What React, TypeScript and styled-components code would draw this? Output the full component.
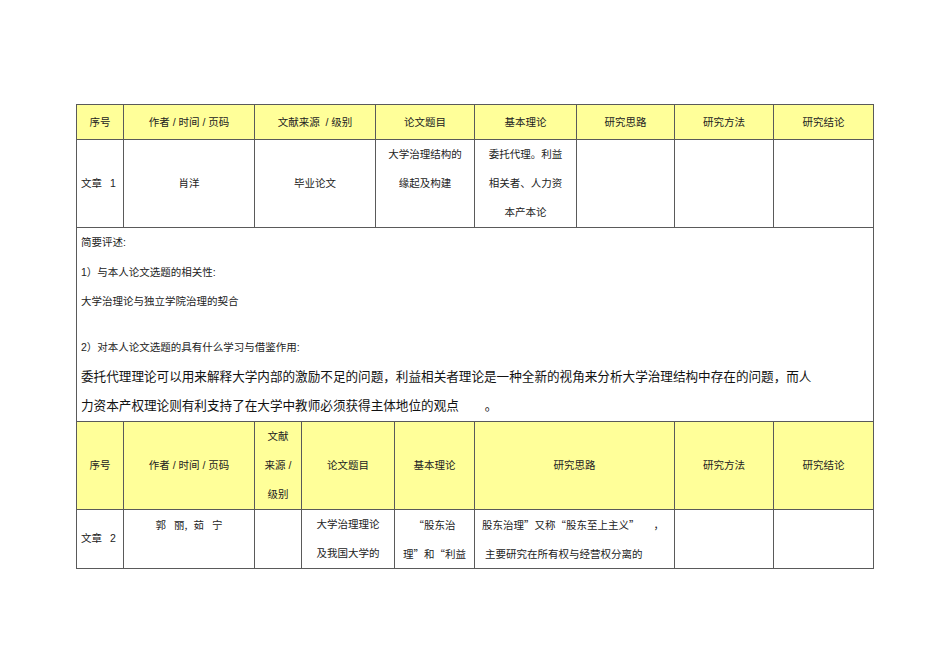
import React from 'react';
import styled, { createGlobalStyle } from 'styled-components';

const GlobalStyle = createGlobalStyle`
  html, body {
    margin: 0;
    padding: 0;
    background: #ffffff;
  }
  body {
    font-family: "Liberation Sans", "Noto Sans CJK SC", sans-serif;
    color: #222222;
  }
`;

const Page = styled.div`
  width: 950px;
  height: 672px;
  padding: 104px 0 0 76px;
  box-sizing: border-box;
`;

const Table = styled.table`
  border-collapse: collapse;
  table-layout: fixed;
  width: 798px;
  & + & {
    margin-top: -1px;
  }
`;

const HeadCell = styled.td`
  background: #ffff99;
  border: 1px solid #5a5a5a;
  padding: 0;
  font-size: 10.5px;
  line-height: 29px;
  text-align: center;
  vertical-align: middle;
  white-space: pre;
`;

const Cell = styled.td<{ $align?: 'left' | 'center'; $valign?: 'top' | 'middle'; $pad?: number; $cjk?: boolean }>`
  border: 1px solid #5a5a5a;
  padding: 0 0 0 ${(p) => p.$pad ?? 0}px;
  font-size: 10.5px;
  line-height: 29px;
  text-align: ${(p) => p.$align ?? 'center'};
  vertical-align: ${(p) => p.$valign ?? 'middle'};
  white-space: nowrap;
  ${(p) => (p.$cjk ? 'font-family: "Noto Sans CJK SC", sans-serif;' : '')}
`;

const SummaryCell = styled.td`
  border: 1px solid #5a5a5a;
  padding: 0 0 0 4px;
  height: 192px;
  vertical-align: top;
`;

const Line = styled.div`
  font-size: 10.5px;
  line-height: 29.5px;
`;

const Spacer = styled.div`
  height: 16.5px;
`;

const BigLine = styled.div`
  font-size: 12.6px;
  line-height: 29px;
  color: #111111;
  white-space: nowrap;
`;

const Gap = styled.span<{ $w: number }>`
  display: inline-block;
  width: ${(p) => p.$w}px;
`;

const firstCols = [47, 131, 121, 99, 102, 98, 99, 100];
const secondCols = [47, 131, 47, 93, 80, 200, 99, 100];

const firstHeads = ['序号', '作者 / 时间 / 页码', '文献来源  / 级别', '论文题目', '基本理论', '研究思路', '研究方法', '研究结论'];

export default function App() {
  return (
    <>
      <GlobalStyle />
      <Page>
        <Table>
          <colgroup>
            {firstCols.map((w, i) => (
              <col key={i} style={{ width: w }} />
            ))}
          </colgroup>
          <tbody>
            <tr>
              {firstHeads.map((h) => (
                <HeadCell key={h} style={{ height: 34 }}>
                  {h}
                </HeadCell>
              ))}
            </tr>
            <tr>
              <Cell $align="left" $pad={4} style={{ height: 87 }}>
                文章<Gap $w={8} />1
              </Cell>
              <Cell>肖洋</Cell>
              <Cell>毕业论文</Cell>
              <Cell $valign="top">
                大学治理结构的
                <br />
                缘起及构建
              </Cell>
              <Cell $valign="top">
                委托代理。利益
                <br />
                相关者、人力资
                <br />
                本产本论
              </Cell>
              <Cell />
              <Cell />
              <Cell />
            </tr>
            <tr>
              <SummaryCell colSpan={8}>
                <Line>简要评述:</Line>
                <Line>1）与本人论文选题的相关性:</Line>
                <Line>大学治理论与独立学院治理的契合</Line>
                <Spacer />
                <Line>2）对本人论文选题的具有什么学习与借鉴作用:</Line>
                <BigLine>
                  委托代理理论可以用来解释大学内部的激励不足的问题，利益相关者理论是一种全新的视角来分析大学治理结构中存在的问题，而人
                </BigLine>
                <BigLine>
                  力资本产权理论则有利支持了在大学中教师必须获得主体地位的观点
                  <Gap $w={26} />。
                </BigLine>
              </SummaryCell>
            </tr>
          </tbody>
        </Table>
        <Table>
          <colgroup>
            {secondCols.map((w, i) => (
              <col key={i} style={{ width: w }} />
            ))}
          </colgroup>
          <tbody>
            <tr>
              <HeadCell style={{ height: 87 }}>序号</HeadCell>
              <HeadCell>作者 / 时间 / 页码</HeadCell>
              <HeadCell>
                文献
                <br />
                来源 /
                <br />
                级别
              </HeadCell>
              <HeadCell>论文题目</HeadCell>
              <HeadCell>基本理论</HeadCell>
              <HeadCell>研究思路</HeadCell>
              <HeadCell>研究方法</HeadCell>
              <HeadCell>研究结论</HeadCell>
            </tr>
            <tr>
              <Cell $align="left" $pad={4} style={{ height: 57 }}>
                文章<Gap $w={8} />2
              </Cell>
              <Cell $valign="top" $cjk>
                郭<Gap $w={8} />丽,<Gap $w={6} />茹<Gap $w={8} />宁
              </Cell>
              <Cell />
              <Cell $valign="top">
                大学治理理论
                <br />
                及我国大学的
              </Cell>
              <Cell $valign="top" $cjk>
                “股东治
                <br />
                理”和“利益
              </Cell>
              <Cell $valign="top" $align="left" $pad={7} $cjk>
                股东治理”又称“股东至上主义”
                <Gap $w={14} />，
                <br />
                <Gap $w={3} />主要研究在所有权与经营权分离的
              </Cell>
              <Cell />
              <Cell />
            </tr>
          </tbody>
        </Table>
      </Page>
    </>
  );
}
